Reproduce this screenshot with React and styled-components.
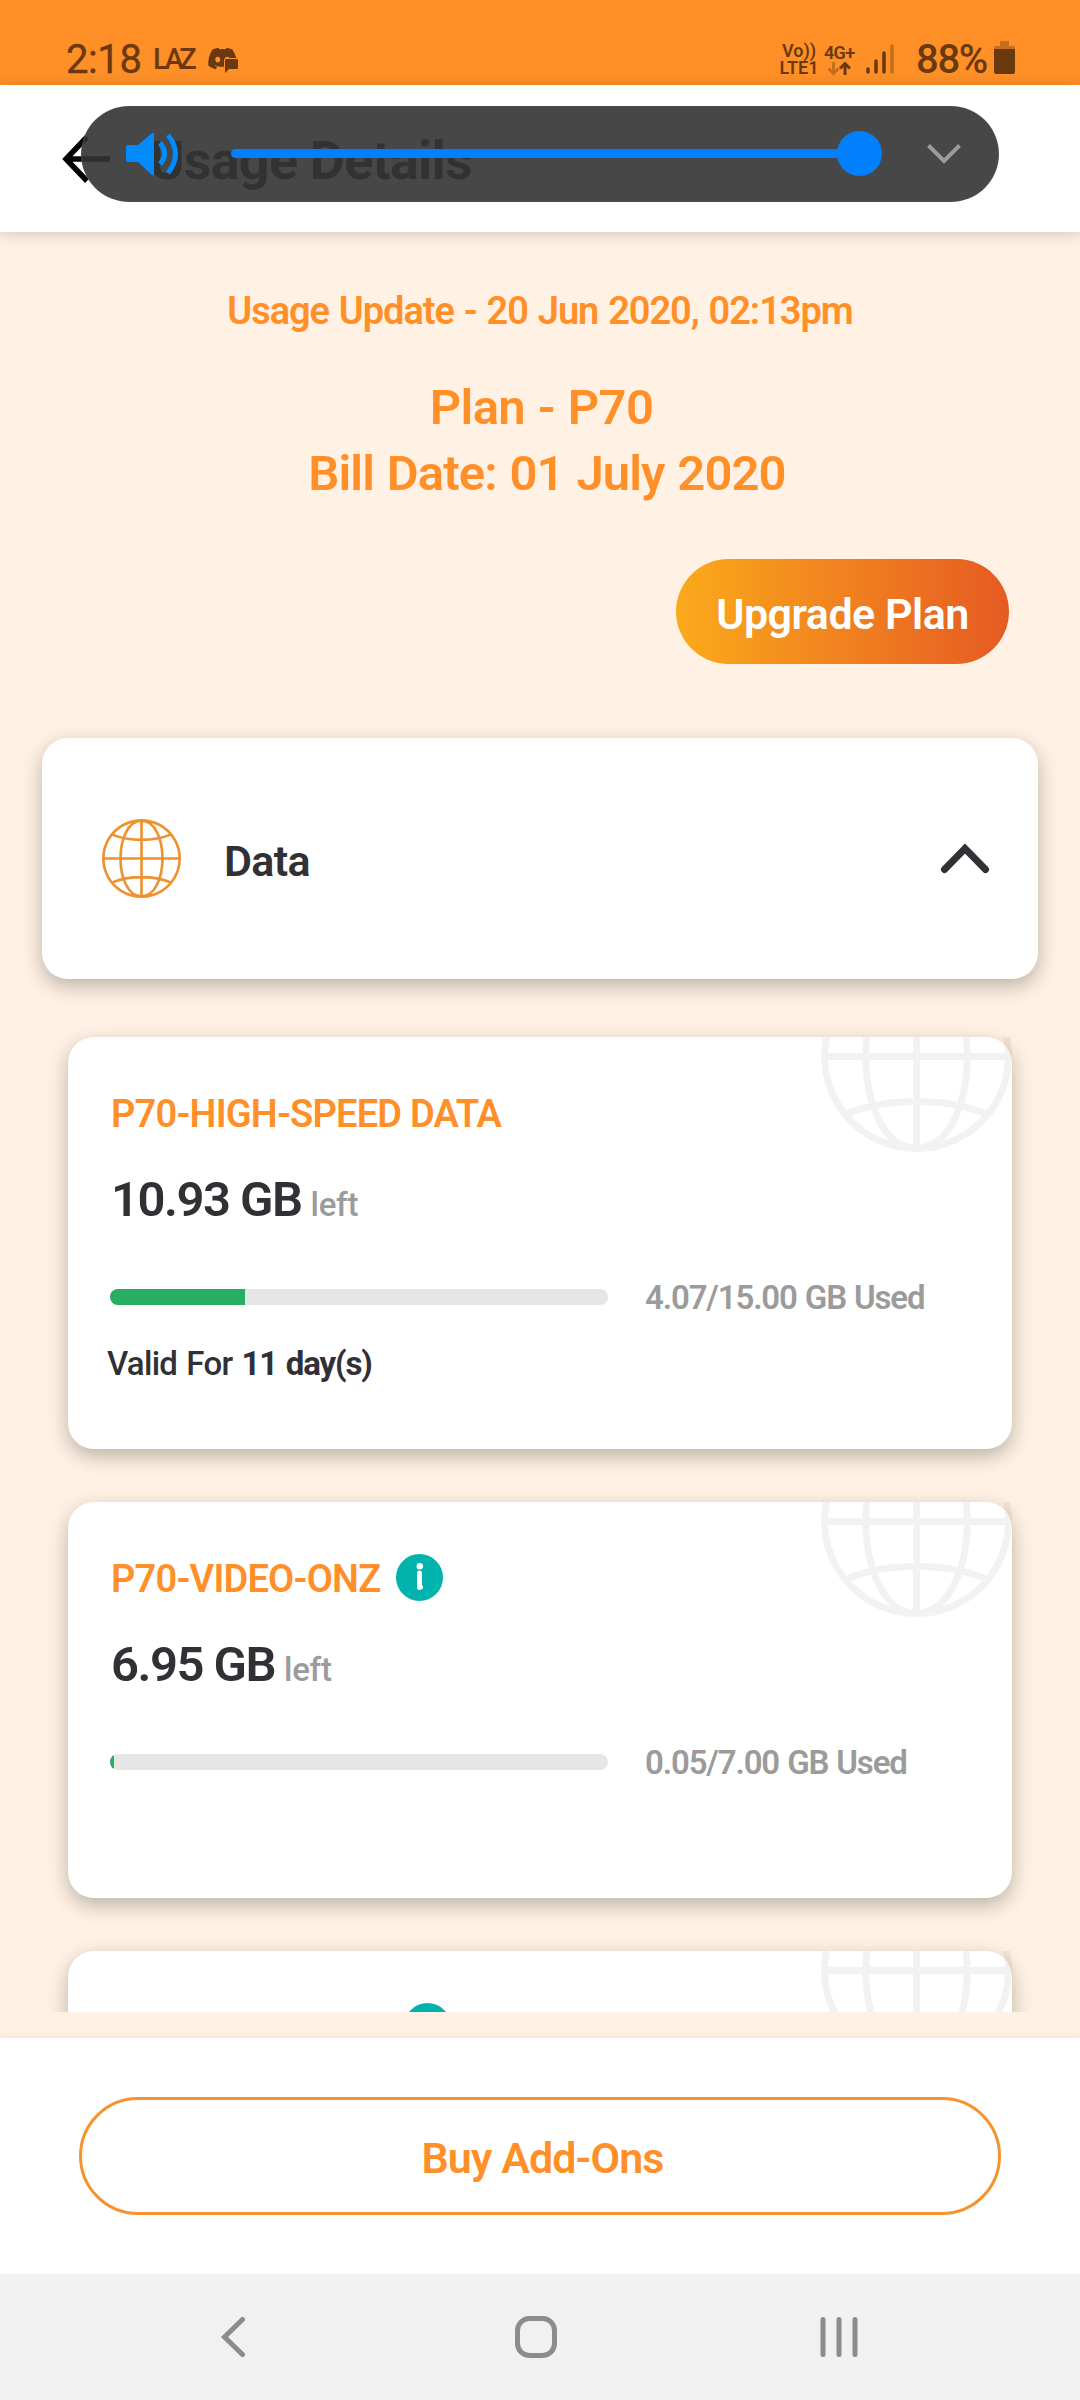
import React from "react";
import styled, { createGlobalStyle } from "styled-components";
import { FaDiscord } from "react-icons/fa6";

const GlobalStyle = createGlobalStyle`
  * {
    box-sizing: border-box;
  }
  body {
    margin: 0;
    font-family: Roboto, "Liberation Sans", sans-serif;
    background: #fff2e4;
  }
`;

const usage = [
    { title: "P70-HIGH-SPEED DATA", left: "10.93 GB", used: "4.07/15.00 GB Used", fill: 135, days: "11 day(s)", height: 412 },
    { title: "P70-VIDEO-ONZ", info: true, left: "6.95 GB", used: "0.05/7.00 GB Used", fill: 4, height: 396 },
    { title: "", info: true, height: 396 },
];

function Globe({ size, stroke, color }) {
    return (
        <svg width={size} height={size} viewBox="0 0 192 192" fill="none" stroke={color} strokeWidth={stroke}>
            <path
                d={`M96 ${stroke / 2}a${96 - stroke / 2} ${96 - stroke / 2} 0 1 0 .01 0zM96 4v184M4 96h184
                M96 4C62 4 45 52 45 96s17 92 51 92 51-48 51-92S130 4 96 4
                M25 38c42 17 100 17 142 0M25 154c42-17 100-17 142 0`}
            />
        </svg>
    );
}

function StatusBar() {
    return (
        <Status>
            <Clock>2:18</Clock>
            <Laz>LAZ</Laz>
            <Discord>
                <FaDiscord size={31} />
                <Bubble viewBox="0 0 16 16">
                    <path d="M3 2h11q1 0 1 1v8q0 1-1 1H6l-4 4V3q0-1 1-1z" fill="#6b390f" stroke="#ff8f27" strokeWidth="2" paintOrder="stroke" />
                </Bubble>
            </Discord>
            <Volte>
                <span>Vo))</span>
                <span>LTE1</span>
            </Volte>
            <Network>
                <span>4G+</span>
                <svg width="26" height="15" viewBox="0 0 26 15" fill="none" strokeWidth="3">
                    <path d="M6.500 1v11M1.500 7.500l5 5 5-5" stroke="#c66e1c" />
                    <path d="M18 14V3M13 7.500l5-5 5 5" stroke="#6b390f" />
                </svg>
            </Network>
            <Signal width="28" height="32" viewBox="0 0 28 32" strokeWidth="3.600" strokeLinecap="round">
                <path d="M2 27v3M10 19v11M18 11v19" stroke="#6b390f" />
                <path d="M26 4v26" stroke="#c66e1c" />
            </Signal>
            <Percent>88%</Percent>
            <svg width="21" height="33" viewBox="0 0 21 33">
                <path d="M6 0h9v5h4q2 0 2 2v2H0V7q0-2 2-2h4z" fill="#c66e1c" />
                <path d="M0 8h21v22q0 3-2 3H2q-2 0-2-3z" fill="#6b390f" />
            </svg>
        </Status>
    );
}

function Volume() {
    return (
        <VolumePill>
            <svg width="54" height="44" viewBox="0 0 54 44">
                <path d="M2 13h10L26 1q2-1 2 1v40q0 2-2 1L12 30H2q-2 0-2-2V15q0-2 2-2z" fill="#008cff" />
                <path d="M34 11q9 10.500 0 21M42 3q15 19 0 38" fill="none" stroke="#008cff" strokeWidth="5" />
            </svg>
            <Track>
                <Knob />
            </Track>
            <svg width="34" height="20" viewBox="0 0 34 20" fill="none" stroke="#9b9b9b" strokeWidth="4">
                <path d="M1.500 1.500L17 17 32.500 1.500" />
            </svg>
        </VolumePill>
    );
}

function UsageItem({ item }) {
    return (
        <UsageCard $height={item.height}>
            <Watermark>
                <Globe size={191} stroke={7} color="rgba(0, 0, 0, 0.05)" />
            </Watermark>
            <TitleRow>
                {item.title ? <UsageTitle>{item.title}</UsageTitle> : <EmptyTitle />}
                {item.info && (
                    <svg width="47" height="47" viewBox="0 0 47 47">
                        <circle cx="23.500" cy="23.500" r="23.500" fill="#00b3ac" />
                        <circle cx="23.800" cy="12.200" r="3.200" fill="#fff" />
                        <path d="M23.500 19v14.500l1-.5" fill="none" stroke="#fff" strokeWidth="5" strokeLinecap="round" strokeLinejoin="round" />
                    </svg>
                )}
            </TitleRow>
            {item.left && (
                <LeftRow>
                    <Amount>{item.left}</Amount>
                    <Left>left</Left>
                </LeftRow>
            )}
            {item.used && (
                <UsedRow>
                    <Bar>
                        <Fill style={{ width: item.fill }} />
                    </Bar>
                    <Used>{item.used}</Used>
                </UsedRow>
            )}
            {item.days && (
                <Valid>
                    Valid For <b>{item.days}</b>
                </Valid>
            )}
        </UsageCard>
    );
}

function App() {
    return (
        <Screen>
            <GlobalStyle />
            <StatusBar />
            <Header>
                <svg width="50" height="48" viewBox="0 0 50 48" fill="none" stroke="#000" strokeWidth="5.500">
                    <path d="M25 2L4 24l21 22M4 24h44" />
                </svg>
                <Heading>Usage Details</Heading>
                <Volume />
            </Header>
            <Content>
                <Updated>Usage Update - 20 Jun 2020, 02:13pm</Updated>
                <Plan>Plan - P70</Plan>
                <BillDate>Bill Date: 01 July 2020</BillDate>
                <Upgrade>Upgrade Plan</Upgrade>
                <DataCard>
                    <Globe size={79} stroke={6.5} color="#ee9230" />
                    <DataLabel>Data</DataLabel>
                    <svg width="50" height="32" viewBox="0 0 50 32" fill="none" stroke="#313135" strokeWidth="7" strokeLinecap="round">
                        <path d="M4.500 26.500L25 5.500l20.500 21" />
                    </svg>
                </DataCard>
                <UsageList>
                    {usage.map((item, i) => (
                        <UsageItem key={i} item={item} />
                    ))}
                </UsageList>
            </Content>
            <Footer>
                <BuyButton>Buy Add-Ons</BuyButton>
            </Footer>
            <NavBar>
                <svg width="26" height="42" viewBox="0 0 26 42">
                    <path d="M22.500 3.500L4.500 21l18 17.500" />
                </svg>
                <HomeIcon width="42" height="42" viewBox="0 0 42 42">
                    <rect x="2.500" y="2.500" width="37" height="37" rx="12" />
                </HomeIcon>
                <svg width="38" height="42" viewBox="0 0 38 42">
                    <path d="M3 3.500v35M19 3.500v35M35 3.500v35" />
                </svg>
            </NavBar>
        </Screen>
    );
}

export default App;

const Screen = styled.div`
  width: 1080px;
  height: 2400px;
  display: flex;
  flex-direction: column;
  overflow: hidden;
  background: #fff2e4;
  white-space: nowrap;
  svg {
    display: block;
    flex: none;
  }
`;

const Status = styled.div`
  height: 85px;
  flex: none;
  display: flex;
  align-items: flex-end;
  padding: 0 65px 11px 66px;
  background: #ff8f27;
  color: #6b390f;
`;

const Clock = styled.div`
  width: 87px;
  font-size: 40px;
  line-height: 28px;
  letter-spacing: -0.4px;
  -webkit-text-stroke: 0.4px #6b390f;
`;

const Laz = styled.div`
  width: 54px;
  font-size: 29px;
  font-weight: 500;
  line-height: 29px;
  letter-spacing: -4.5px;
`;

const Discord = styled.div`
  position: relative;
  height: 31px;
`;

const Bubble = styled.svg`
  position: absolute;
  width: 16px;
  height: 16px;
  left: 16px;
  top: 14px;
`;

const Volte = styled.div`
  display: flex;
  flex-direction: column;
  align-items: center;
  width: 40px;
  margin-left: auto;
  font-size: 18px;
  font-weight: 600;
  line-height: 17px;
  margin-bottom: -2px;
`;

const Network = styled.div`
  display: flex;
  flex-direction: column;
  width: 32px;
  margin: 0 10px 0 5px;
  font-size: 18px;
  font-weight: 600;
  line-height: 17px;
  letter-spacing: -0.7px;
  margin-bottom: -2px;
  svg {
    margin-left: 3px;
  }
`;

const Signal = styled.svg`
  margin-right: 22px;
`;

const Percent = styled.div`
  width: 78px;
  font-size: 40px;
  font-weight: 500;
  line-height: 28px;
  letter-spacing: -1.3px;
`;

const Header = styled.div`
  position: relative;
  z-index: 1;
  height: 147px;
  flex: none;
  display: flex;
  align-items: center;
  padding: 0 0 0 62px;
  background: #fff;
  box-shadow: 0 2px 14px rgba(0, 0, 0, 0.18);
`;

const Heading = styled.div`
  margin: 5px 0 0 37px;
  font-size: 54px;
  font-weight: 700;
  line-height: 60px;
  letter-spacing: -0.8px;
  color: #313135;
`;

const VolumePill = styled.div`
  position: absolute;
  left: 81px;
  top: 21px;
  width: 918px;
  height: 96px;
  border-radius: 48px;
  border: 1px solid rgba(80, 80, 80, 0.9);
  background: rgba(51, 51, 51, 0.9);
  display: flex;
  align-items: center;
  padding: 0 37px 1px 44px;
  justify-content: space-between;
`;

const Track = styled.div`
  width: 629px;
  height: 9px;
  margin: 0 16px 0 0;
  border-radius: 5px;
  background: #0080ff;
  display: flex;
  align-items: center;
  justify-content: flex-end;
`;

const Knob = styled.div`
  flex: none;
  width: 45px;
  height: 45px;
  margin-right: -22px;
  border-radius: 50%;
  background: #0080ff;
`;

const Content = styled.div`
  height: 1780px;
  flex: none;
  overflow: hidden;
  display: flex;
  flex-direction: column;
  align-items: center;
  padding: 54px 42px 0;
  color: #ff9029;
  font-weight: 600;
`;

const Updated = styled.div`
  flex: none;
  font-size: 38px;
  line-height: 50px;
  letter-spacing: -1.05px;
  word-spacing: 1.5px;
  margin-bottom: 39px;
`;

const Plan = styled.div`
  flex: none;
  font-size: 49px;
  line-height: 66px;
  letter-spacing: -0.6px;
  word-spacing: 1px;
  padding-left: 3px;
`;

const BillDate = styled(Plan)`
  padding-left: 14px;
  letter-spacing: -0.9px;
  word-spacing: 1.5px;
`;

const Upgrade = styled.div`
  flex: none;
  align-self: flex-end;
  width: 333px;
  height: 105px;
  margin: 52px 29px 74px 0;
  border-radius: 53px;
  display: flex;
  align-items: center;
  justify-content: center;
  padding-top: 4px;
  background: linear-gradient(90deg, #fbaa1b, #e65a23);
  color: #fff;
  font-size: 43px;
  letter-spacing: -0.5px;
`;

const Card = styled.div`
  flex: none;
  border-radius: 26px;
  background: #fff;
  box-shadow: 0 7px 20px rgba(0, 0, 0, 0.27);
`;

const DataCard = styled(Card)`
  width: 996px;
  height: 241px;
  display: flex;
  align-items: center;
  padding: 0 48px 0 60px;
`;

const DataLabel = styled.div`
  margin: 4px auto 0 43px;
  font-size: 43px;
  letter-spacing: -0.7px;
  color: #313135;
`;

const UsageList = styled.div`
  width: 944px;
  margin-top: 58px;
  display: flex;
  flex-direction: column;
  gap: 53px;
`;

const UsageCard = styled(Card)`
  position: relative;
  height: ${(props) => props.$height}px;
  padding: 46px 0 0 42px;
`;

// square clip, the globe runs past the rounded corner of the card
const Watermark = styled.div`
  position: absolute;
  top: 0;
  right: 0;
  height: 115px;
  overflow: hidden;
  display: flex;
  align-items: flex-end;
`;

const TitleRow = styled.div`
  display: flex;
  align-items: center;
  height: 58px;
  gap: 16px;
`;

const UsageTitle = styled.div`
  padding: 4px 0 0 1px;
  font-size: 38px;
  letter-spacing: -0.8px;
`;

const EmptyTitle = styled.div`
  width: 278px;
`;

const LeftRow = styled.div`
  display: flex;
  align-items: baseline;
  height: 66px;
  margin-top: 26px;
  line-height: 66px;
`;

const Amount = styled.div`
  padding-left: 1px;
  font-size: 49px;
  letter-spacing: -1.5px;
  color: #313135;
`;

const Left = styled.div`
  margin-left: 9px;
  font-size: 33px;
  font-weight: 500;
  letter-spacing: -0.3px;
  color: #9b9b9b;
`;

const UsedRow = styled.div`
  display: flex;
  align-items: center;
  height: 40px;
  margin-top: 44px;
`;

const Bar = styled.div`
  width: 498px;
  height: 16px;
  border-radius: 8px;
  overflow: hidden;
  background: #e6e6e6;
`;

const Fill = styled.div`
  height: 100%;
  background: #27ae60;
`;

const Used = styled.div`
  margin-left: 37px;
  font-size: 33px;
  letter-spacing: -1.15px;
  word-spacing: 1px;
  color: #9b9b9b;
`;

const Valid = styled.div`
  margin: 27px 0 0 -3px;
  font-size: 33px;
  font-weight: 500;
  line-height: 40px;
  letter-spacing: -0.7px;
  word-spacing: 1.5px;
  color: #313135;
  b {
    letter-spacing: -1.1px;
  }
`;

const Footer = styled.div`
  height: 236px;
  flex: none;
  margin-top: 26px;
  padding: 59px 79px 0;
  background: #fff;
  box-shadow: 0 2px 10px rgba(60, 30, 0, 0.15);
`;

const BuyButton = styled.div`
  height: 118px;
  border: 3px solid #f7932f;
  border-radius: 59px;
  display: flex;
  align-items: center;
  justify-content: center;
  padding: 3px 0 0 5px;
  color: #ff9029;
  font-size: 43px;
  font-weight: 600;
  letter-spacing: -0.9px;
`;

const NavBar = styled.div`
  height: 126px;
  flex: none;
  display: flex;
  align-items: center;
  justify-content: space-between;
  padding: 0 222px 0 220px;
  background: #f1f1f1;
  svg {
    fill: none;
    stroke: #8c8c8c;
    stroke-width: 5px;
    stroke-linecap: round;
  }
`;

const HomeIcon = styled.svg`
  margin-left: 6px;
`;
